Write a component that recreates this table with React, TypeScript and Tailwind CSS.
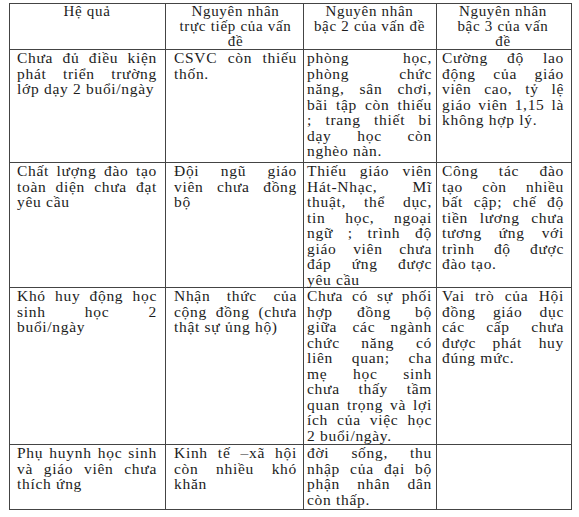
import React from "react";

type Row = { cells: string[][]; h: string };

const header: string[][] = [
  ["Hệ quả"],
  ["Nguyên nhân", "trực tiếp của vấn", "đề"],
  ["Nguyên nhân", "bậc 2 của vấn đề"],
  ["Nguyên nhân", "bậc 3 của vấn", "đề"],
];

const rows: Row[] = [
  {
    h: "h-[113px]",
    cells: [
      ["Chưa đủ điều kiện", "phát triển trường", "lớp dạy 2 buổi/ngày"],
      ["CSVC còn thiếu", "thốn."],
      ["phòng học,", "phòng chức", "năng, sân chơi,", "bãi tập còn thiếu", "; trang thiết bi", "dạy học còn", "nghèo nàn."],
      ["Cường độ lao", "động của giáo", "viên cao, tỷ lệ", "giáo viên 1,15 là", "không hợp lý."],
    ],
  },
  {
    h: "h-[125px]",
    cells: [
      ["Chất lượng đào tạo", "toàn diện chưa đạt", "yêu cầu"],
      ["Đội ngũ giáo", "viên chưa đồng", "bộ"],
      ["Thiếu giáo viên", "Hát-Nhạc, Mĩ", "thuật, thể dục,", "tin học, ngoại", "ngữ ; trình độ", "giáo viên chưa", "đáp ứng được", "yêu cầu"],
      ["Công tác đào", "tạo còn nhiều", "bất cập; chế độ", "tiền lương chưa", "tương ứng với", "trình độ được", "đào tạo."],
    ],
  },
  {
    h: "h-[157px]",
    cells: [
      ["Khó huy động học", "sinh học 2", "buổi/ngày"],
      ["Nhận thức của", "cộng đồng (chưa", "thật sự ủng hộ)"],
      ["Chưa có sự phối", "hợp đồng bộ", "giữa các ngành", "chức năng có", "liên quan; cha", "mẹ học sinh", "chưa thấy tầm", "quan trọng và lợi", "ích của việc học", "2 buổi/ngày."],
      ["Vai trò của Hội", "đồng giáo dục", "các cấp chưa", "được phát huy", "đúng mức."],
    ],
  },
  {
    h: "h-[65px]",
    cells: [
      ["Phụ huynh học sinh", "và giáo viên chưa", "thích ứng"],
      ["Kinh tế –xã hội", "còn nhiều khó", "khăn"],
      ["đời sống, thu", "nhập của đại bộ", "phận nhân dân", "còn thấp."],
      [],
    ],
  },
];

const pad = ["pl-[7px] pr-[8px]", "pl-[8px] pr-[6px]", "pl-[3px] pr-[4px]", "pl-[5px] pr-[7px]"];

function Lines({ lines, center }: { lines: string[]; center?: boolean }) {
  return (
    <>
      {lines.map((l, i) =>
        center ? (
          <div key={i} className="whitespace-nowrap text-center">
            {l}
          </div>
        ) : i < lines.length - 1 ? (
          <div key={i} className="whitespace-nowrap text-justify [text-align-last:justify]">
            {l}
          </div>
        ) : (
          <div key={i} className="whitespace-nowrap text-left">
            {l}
          </div>
        )
      )}
    </>
  );
}

export default function App() {
  return (
    <div className="w-[579px] h-[517px] bg-white pt-[3px] pl-[9px] overflow-hidden">
      <table
        className="table-fixed border-collapse text-[#1c1c1c] text-[15.5px] leading-[15.5px] tracking-[0.7px]"
        style={{ fontFamily: '"Liberation Serif", "DejaVu Serif", serif' }}
      >
        <colgroup>
          <col className="w-[156px]" />
          <col className="w-[138px]" />
          <col className="w-[133px]" />
          <col className="w-[135px]" />
        </colgroup>
        <thead>
          <tr className="h-[46px]">
            {header.map((c, i) => (
              <th key={i} className={`border border-[#444] align-top font-normal pt-0 text-[15px] leading-[15px] ${pad[i]}`}>
                <Lines lines={c} center />
              </th>
            ))}
          </tr>
        </thead>
        <tbody>
          {rows.map((r, ri) => (
            <tr key={ri} className={r.h}>
              {r.cells.map((c, i) => (
                <td key={i} className={`border border-[#444] align-top pt-0 ${pad[i]}`}>
                  <Lines lines={c} />
                </td>
              ))}
            </tr>
          ))}
        </tbody>
      </table>
    </div>
  );
}
